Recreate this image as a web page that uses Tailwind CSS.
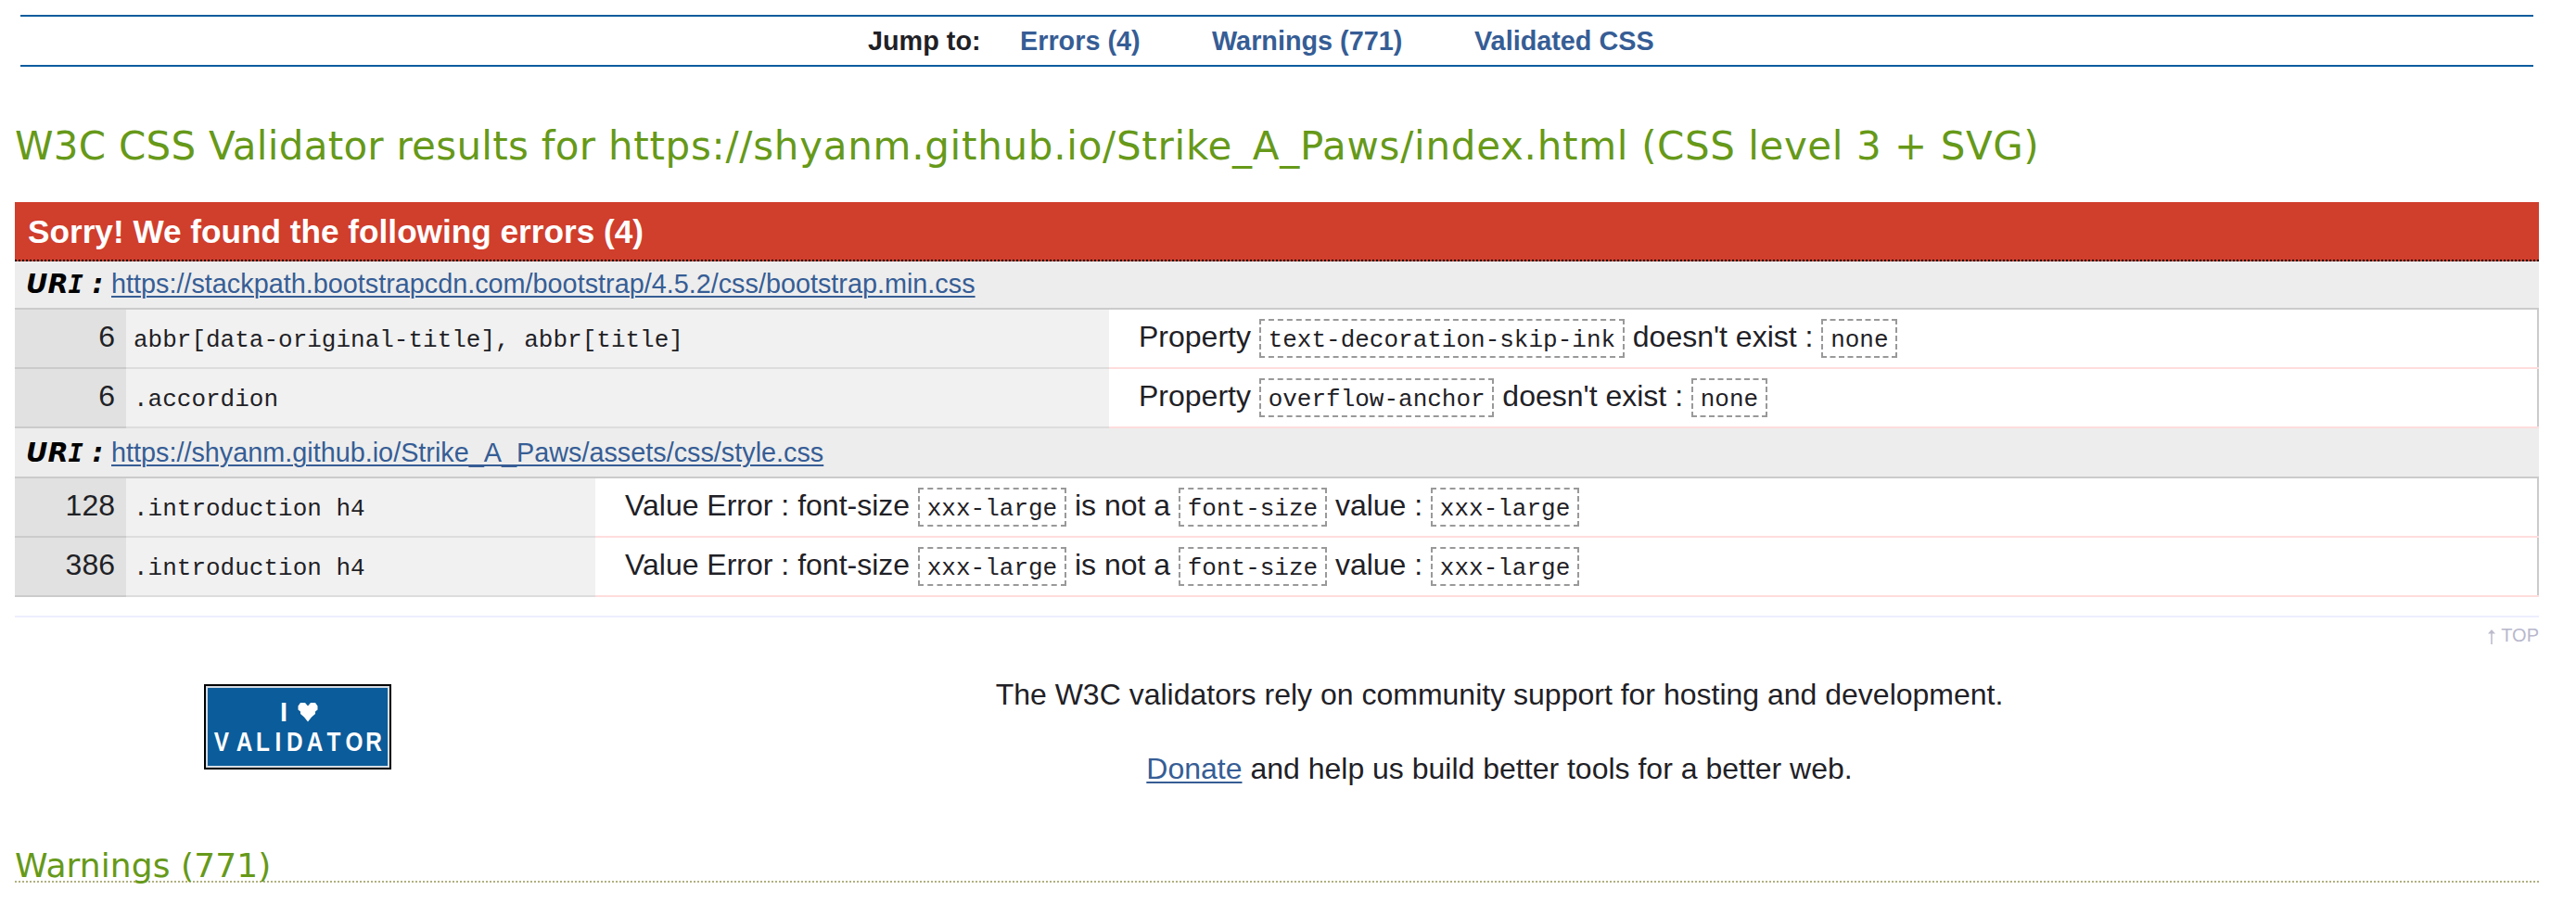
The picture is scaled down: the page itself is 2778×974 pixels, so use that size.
<!DOCTYPE html>
<html lang="en">
<head>
<meta charset="utf-8">
<title>W3C CSS Validator results</title>
<script src="https://cdn.jsdelivr.net/npm/@tailwindcss/browser@4"></script>
</head>
<body class="bg-white text-[#1f2126] font-['Liberation_Sans',Arial,sans-serif] text-[32px] h-[974px] overflow-hidden">
<div class="pt-4 pr-10 pl-4">

  <nav class="mx-[6px] h-14 border-y-2 border-[#0b5c9e] flex pl-[914px] text-[28.8px] leading-[52px] font-bold text-[#365d95] whitespace-nowrap">
    <span class="text-[#1f2126] w-[164px]">Jump to:</span>
    <a class="w-[207px]">Errors (4)</a>
    <a class="w-[283px]">Warnings (771)</a>
    <a>Validated CSS</a>
  </nav>

  <h2 class="mt-[71px] mb-[45px] h-[30px] leading-[30px] text-[42px] text-[#669919] font-['DejaVu_Sans',sans-serif] whitespace-nowrap"><span class="tracking-[0.27px]">W3C CSS Validator results for </span><span class="tracking-[0.72px]">https://shyanm.github.io/Strike_A_Paws/index.html</span><span class="tracking-[0.56px]"> (CSS level 3 + SVG)</span></h2>

  <h3 class="h-16 bg-[#d03e2c] border-b-2 border-dotted border-black text-white font-bold text-[35.2px] leading-[63px] pl-[14px]">Sorry! We found the following errors (4)</h3>

  <section>
    <h4 class="flex h-[50px] bg-[#ededed] pl-3 text-[28.8px] leading-[48px] whitespace-nowrap">
      <span class="w-[92px] text-black font-bold italic text-[28.8px] font-['DejaVu_Sans',sans-serif]">UR<span class="text-[27px] font-['DejaVu_Sans_Mono',monospace]">I</span> :</span>
      <a class="text-[#365d95] underline decoration-2 underline-offset-[3px]">https://stackpath.bootstrapcdn.com/bootstrap/4.5.2/css/bootstrap.min.css</a>
    </h4>
    <div class="h-[2px] bg-[#cbcbcb]"></div>
    <div class="flex h-16 leading-[58px] whitespace-nowrap">
      <div class="w-[120px] pr-3 text-right bg-[#e1e1e1] border-b-2 border-[#cbcbcb]">6</div>
      <div class="w-[1060px] pl-2 bg-[#f1f1f1] border-b-2 border-[#dddddd]"><code class="text-[26px] font-['Liberation_Mono',monospace]">abbr[data-original-title], abbr[title]</code></div>
      <div class="flex-1 flex flex-col">
        <div class="flex-1 pl-8 border-r-2 border-[#cbcbcb]">Property <code class="text-[26px] font-['Liberation_Mono',monospace] border-2 border-dashed border-[#999999] px-[7.8px] pt-[6px] pb-[2px]">text-decoration-skip-ink</code> doesn't exist : <code class="text-[26px] font-['Liberation_Mono',monospace] border-2 border-dashed border-[#999999] px-[7.8px] pt-[6px] pb-[2px]">none</code></div>
        <div class="h-[2px] bg-[#ffdddd]"></div>
      </div>
    </div>
    <div class="flex h-16 leading-[58px] whitespace-nowrap">
      <div class="w-[120px] pr-3 text-right bg-[#e1e1e1] border-b-2 border-[#cbcbcb]">6</div>
      <div class="w-[1060px] pl-2 bg-[#f1f1f1] border-b-2 border-[#dddddd]"><code class="text-[26px] font-['Liberation_Mono',monospace]">.accordion</code></div>
      <div class="flex-1 flex flex-col">
        <div class="flex-1 pl-8 border-r-2 border-[#cbcbcb]">Property <code class="text-[26px] font-['Liberation_Mono',monospace] border-2 border-dashed border-[#999999] px-[7.8px] pt-[6px] pb-[2px]">overflow-anchor</code> doesn't exist : <code class="text-[26px] font-['Liberation_Mono',monospace] border-2 border-dashed border-[#999999] px-[7.8px] pt-[6px] pb-[2px]">none</code></div>
        <div class="h-[2px] bg-[#ffdddd]"></div>
      </div>
    </div>
  </section>

  <section>
    <h4 class="flex h-[52px] bg-[#ededed] pl-3 text-[28.8px] leading-[52px] whitespace-nowrap">
      <span class="w-[92px] text-black font-bold italic text-[28.8px] font-['DejaVu_Sans',sans-serif]">UR<span class="text-[27px] font-['DejaVu_Sans_Mono',monospace]">I</span> :</span>
      <a class="text-[#365d95] underline decoration-2 underline-offset-[3px]">https://shyanm.github.io/Strike_A_Paws/assets/css/style.css</a>
    </h4>
    <div class="h-[2px] bg-[#cbcbcb]"></div>
    <div class="flex h-16 leading-[58px] whitespace-nowrap">
      <div class="w-[120px] pr-3 text-right bg-[#e1e1e1] border-b-2 border-[#cbcbcb]">128</div>
      <div class="w-[506px] pl-2 bg-[#f1f1f1] border-b-2 border-[#dddddd]"><code class="text-[26px] font-['Liberation_Mono',monospace]">.introduction h4</code></div>
      <div class="flex-1 flex flex-col">
        <div class="flex-1 pl-8 border-r-2 border-[#cbcbcb]">Value Error : font-size <code class="text-[26px] font-['Liberation_Mono',monospace] border-2 border-dashed border-[#999999] px-[7.8px] pt-[6px] pb-[2px]">xxx-large</code> is not a <code class="text-[26px] font-['Liberation_Mono',monospace] border-2 border-dashed border-[#999999] px-[7.8px] pt-[6px] pb-[2px]">font-size</code> value : <code class="text-[26px] font-['Liberation_Mono',monospace] border-2 border-dashed border-[#999999] px-[7.8px] pt-[6px] pb-[2px]">xxx-large</code></div>
        <div class="h-[2px] bg-[#ffdddd]"></div>
      </div>
    </div>
    <div class="flex h-16 leading-[58px] whitespace-nowrap">
      <div class="w-[120px] pr-3 text-right bg-[#e1e1e1] border-b-2 border-[#cbcbcb]">386</div>
      <div class="w-[506px] pl-2 bg-[#f1f1f1] border-b-2 border-[#dddddd]"><code class="text-[26px] font-['Liberation_Mono',monospace]">.introduction h4</code></div>
      <div class="flex-1 flex flex-col">
        <div class="flex-1 pl-8 border-r-2 border-[#cbcbcb]">Value Error : font-size <code class="text-[26px] font-['Liberation_Mono',monospace] border-2 border-dashed border-[#999999] px-[7.8px] pt-[6px] pb-[2px]">xxx-large</code> is not a <code class="text-[26px] font-['Liberation_Mono',monospace] border-2 border-dashed border-[#999999] px-[7.8px] pt-[6px] pb-[2px]">font-size</code> value : <code class="text-[26px] font-['Liberation_Mono',monospace] border-2 border-dashed border-[#999999] px-[7.8px] pt-[6px] pb-[2px]">xxx-large</code></div>
        <div class="h-[2px] bg-[#ffdddd]"></div>
      </div>
    </div>
  </section>

  <div class="mt-5 h-[2px] bg-[#eeeeff]"></div>
  <div class="flex justify-end items-start gap-[6px] mt-2 h-[64px] text-[20px] leading-[22px] text-[#b8b8cc]">
    <svg class="mt-[4px]" width="8" height="18" viewBox="0 0 9 18"><path d="M4.5 2V18" stroke="#c4c4d2" stroke-width="2"/><path d="M4.5 0L9 5H0Z" fill="#bbbbcc"/></svg>
    <a>TOP</a>
  </div>

  <div class="flex h-[92px]">
    <div class="w-[744px] pl-[204px]">
      <svg width="202" height="92" viewBox="0 0 202 92">
        <rect width="202" height="92" fill="#000000"/>
        <rect x="2" y="2" width="198" height="88" fill="#d5dde4"/>
        <rect x="4" y="4" width="194" height="84" fill="#0b5c9a"/>
        <g fill="#ffffff" font-family="'Liberation Sans',sans-serif" font-weight="700" font-size="29" text-anchor="middle">
          <text x="86" y="40">I</text>
          <g transform="scale(.84 1)">
            <text x="22.6 51.8 75.6 95.2 116.5 142.3 166.6 192.8 217.8" y="72">VALIDATOR</text>
          </g>
        </g>
        <path fill="#ffffff" d="M104 20h5l3 3.500l3-3.500h5l2.500 3.500v4l-2.500 2v2.500l-4 3.500l-4 5l-4-5l-4-3.500v-2.500l-2.500-2v-4z"/>
      </svg>
    </div>
    <div class="w-[1714px] text-center leading-[80px]">
      <p class="-mt-[29px]">The W3C validators rely on community support for hosting and development.</p>
      <p><a class="text-[#365d95] underline decoration-2 underline-offset-[3px]">Donate</a> and help us build better tools for a better web.</p>
    </div>
  </div>

  <h3 class="mt-[88px] h-[34px] border-b-2 border-dotted border-[#b0b080] text-[36px] tracking-[0.1px] leading-[32px] text-[#669919] font-['DejaVu_Sans',sans-serif] whitespace-nowrap">Warnings (771)</h3>
</div>
</body>
</html>
